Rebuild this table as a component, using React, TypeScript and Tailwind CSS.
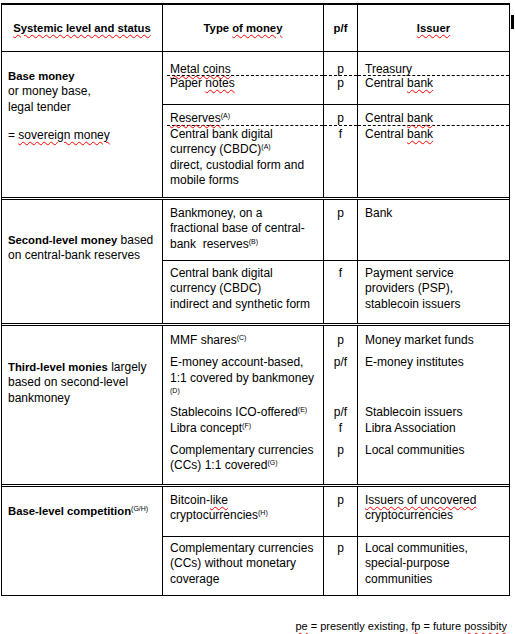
import React from "react";

const SQ = "underline decoration-wavy decoration-[#ff0000] decoration-1 underline-offset-2";

function Sup({ children }: { children: React.ReactNode }) {
  return <span className="relative -top-[4px] text-[7px] leading-none">{children}</span>;
}

function B({ children }: { children: React.ReactNode }) {
  return <span className="font-bold text-[11.3px]">{children}</span>;
}

type GProps = {
  c2: React.ReactNode;
  c3?: React.ReactNode;
  c4?: React.ReactNode;
  pad?: string;
  dashed?: boolean;
  lead?: string;
  grow?: boolean;
};

function G({ c2, c3, c4, pad = "", dashed = false, lead = "", grow = false }: GProps) {
  const inner = dashed ? "border-b border-dashed border-black" : "";
  return (
    <div className={`grid grid-cols-[161px_34px_152px] ${grow ? "flex-1" : ""}`}>
      <div className={`border-l border-black pl-[4px] ${pad}`}>
        <div className={`pl-[3px] whitespace-nowrap ${lead} ${inner}`}>{c2}</div>
      </div>
      <div className={`border-l border-black ${pad}`}>
        <div className={`text-center whitespace-nowrap ${lead} ${inner}`}>{c3}</div>
      </div>
      <div className={`border-l border-black ${pad}`}>
        <div className={`pl-[7px] whitespace-nowrap ${lead} ${inner}`}>{c4}</div>
      </div>
    </div>
  );
}

function L({ children }: { children: React.ReactNode }) {
  return <div>{children}</div>;
}

export default function App() {
  return (
    <div className="relative w-[515px] h-[634px] bg-white text-black font-['Liberation_Sans',Arial,sans-serif] text-[12px] leading-[15.33px] pt-[3px]">
      <div className="ml-[1px] w-[509px] border-x border-black">
        {/* Header */}
        <div className="grid grid-cols-[160px_161px_34px_152px] h-[49px] border-t-2 border-b border-black font-bold text-[11.3px]">
          <div className="flex items-center justify-center pt-[1px]">
            <span className={SQ}>Systemic level and status</span>
          </div>
          <div className="flex items-center justify-center border-l border-black pt-[1px]">
            <span>
              Type <span className={SQ}>of money</span>
            </span>
          </div>
          <div className="flex items-center justify-center border-l border-black pt-[1px]">p/f</div>
          <div className="flex items-center justify-center border-l border-black pt-[1px]">
            <span className={SQ}>Issuer</span>
          </div>
        </div>

        {/* Section 1: Base money */}
        <div className="flex border-b-[3px] border-double border-black">
          <div className="w-[160px] shrink-0 pl-[6px] pt-[17px] whitespace-nowrap">
            <L><B>Base money</B></L>
            <L>or money base,</L>
            <L>legal tender</L>
            <div className="mt-[13px]">
              = <span className={SQ}>sovereign money</span>
            </div>
          </div>
          <div className="flex-1 flex flex-col">
            <div className="h-[53px] flex flex-col border-b border-black">
              <G
                pad="pt-[11px]"
                dashed
                lead="leading-[12px]"
                c2={<span className={SQ}>Metal coins</span>}
                c3="p"
                c4="Treasury"
              />
              <G
                grow
                c2={
                  <span>
                    Paper <span className={SQ}>notes</span>
                  </span>
                }
                c3="p"
                c4={
                  <span>
                    Central <span className={SQ}>bank</span>
                  </span>
                }
              />
            </div>
            <div className="h-[92px] flex flex-col">
              <G
                pad="pt-[6px]"
                dashed
                lead="leading-[14px]"
                c2={
                  <span>
                    <span className={SQ}>Reserves</span>
                    <Sup>(A)</Sup>
                  </span>
                }
                c3="p"
                c4={
                  <span>
                    Central <span className={SQ}>bank</span>
                  </span>
                }
              />
              <G
                grow
                pad="pt-[1px]"
                c2={
                  <>
                    <L>Central bank digital</L>
                    <L>
                      currency (CBDC)<Sup>(A)</Sup>
                    </L>
                    <L>direct, custodial form and</L>
                    <L>mobile forms</L>
                  </>
                }
                c3="f"
                c4={
                  <span>
                    Central <span className={SQ}>bank</span>
                  </span>
                }
              />
            </div>
          </div>
        </div>

        {/* Section 2: Second-level money */}
        <div className="flex border-b-[3px] border-double border-black">
          <div className="w-[160px] shrink-0 pl-[6px] pt-[33px] whitespace-nowrap">
            <L>
              <B>Second-level money</B> based
            </L>
            <L>on central-bank reserves</L>
          </div>
          <div className="flex-1 flex flex-col">
            <div className="h-[61px] flex flex-col border-b border-black">
              <G
                grow
                pad="pt-[6px]"
                c2={
                  <>
                    <L>Bankmoney, on a</L>
                    <L>fractional base of central-</L>
                    <L>
                      bank&nbsp; reserves<Sup>(B)</Sup>
                    </L>
                  </>
                }
                c3="p"
                c4="Bank"
              />
            </div>
            <div className="h-[62px] flex flex-col">
              <G
                grow
                pad="pt-[5px]"
                c2={
                  <>
                    <L>Central bank digital</L>
                    <L>currency (CBDC)</L>
                    <L>indirect and synthetic form</L>
                  </>
                }
                c3="f"
                c4={
                  <>
                    <L>Payment service</L>
                    <L>providers (PSP),</L>
                    <L>stablecoin issuers</L>
                  </>
                }
              />
            </div>
          </div>
        </div>

        {/* Section 3: Third-level monies */}
        <div className="flex border-b-[3px] border-double border-black">
          <div className="w-[160px] shrink-0 pl-[6px] pt-[34px] whitespace-nowrap">
            <L>
              <B>Third-level monies</B> largely
            </L>
            <L>based on second-level</L>
            <L>bankmoney</L>
          </div>
          <div className="flex-1 flex flex-col">
            <div className="h-[158px] flex flex-col">
              <G
                pad="pt-[7px]"
                c2={
                  <span>
                    MMF shares<Sup>(C)</Sup>
                  </span>
                }
                c3="p"
                c4="Money market funds"
              />
              <G
                pad="pt-[7px]"
                c2={
                  <>
                    <L>E-money account-based,</L>
                    <L>1:1 covered by bankmoney</L>
                    <L>
                      <Sup>(D)</Sup>
                    </L>
                  </>
                }
                c3="p/f"
                c4="E-money institutes"
              />
              <G
                pad="pt-[4px]"
                c2={
                  <>
                    <L>
                      Stablecoins ICO-offered<Sup>(E)</Sup>
                    </L>
                    <L>
                      Libra concept<Sup>(F)</Sup>
                    </L>
                  </>
                }
                c3={
                  <>
                    <L>p/f</L>
                    <L>f</L>
                  </>
                }
                c4={
                  <>
                    <L>Stablecoin issuers</L>
                    <L>Libra Association</L>
                  </>
                }
              />
              <G
                grow
                pad="pt-[7px]"
                c2={
                  <>
                    <L>Complementary currencies</L>
                    <L>
                      (CCs) 1:1 covered<Sup>(G)</Sup>
                    </L>
                  </>
                }
                c3="p"
                c4="Local communities"
              />
            </div>
          </div>
        </div>

        {/* Section 4: Base-level competition */}
        <div className="flex border-b border-black">
          <div className="w-[160px] shrink-0 pl-[6px] pt-[17px] whitespace-nowrap">
            <L>
              <B>Base-level competition</B>
              <Sup>(G/H)</Sup>
            </L>
          </div>
          <div className="flex-1 flex flex-col">
            <div className="h-[50px] flex flex-col border-b border-black">
              <G
                grow
                pad="pt-[6px]"
                c2={
                  <>
                    <L>
                      Bitcoin-<span className={SQ}>like</span>
                    </L>
                    <L>
                      cryptocurrencies<Sup>(H)</Sup>
                    </L>
                  </>
                }
                c3="p"
                c4={
                  <>
                    <L>
                      <span className={SQ}>Issuers of uncovered</span>
                    </L>
                    <L>cryptocurrencies</L>
                  </>
                }
              />
            </div>
            <div className="h-[58px] flex flex-col">
              <G
                grow
                pad="pt-[4px]"
                c2={
                  <>
                    <L>Complementary currencies</L>
                    <L>(CCs) without monetary</L>
                    <L>coverage</L>
                  </>
                }
                c3="p"
                c4={
                  <>
                    <L>Local communities,</L>
                    <L>special-purpose</L>
                    <L>communities</L>
                  </>
                }
              />
            </div>
          </div>
        </div>
      </div>

      {/* Footer */}
      <div className="mt-[23px] pr-[8px] text-right whitespace-nowrap text-[11px]">
        <span className={SQ}>pe</span> = presently existing, <span className={SQ}>fp</span> = future{" "}
        <span className={SQ}>possibity</span>
      </div>

      <div className="absolute left-[511px] top-[15px] w-[3px] h-[14px] bg-black" />
    </div>
  );
}
